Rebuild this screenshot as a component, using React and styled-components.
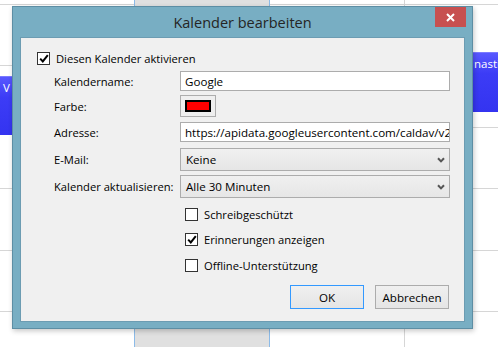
import React from "react";
import styled, { createGlobalStyle } from "styled-components";

const GlobalStyle = createGlobalStyle`
  html, body {
    margin: 0;
    padding: 0;
    background: #ffffff;
  }
  body {
    font-family: "Open Sans", "Noto Sans", sans-serif;
    color: #000000;
  }
`;

const Screen = styled.div`
  position: relative;
  width: 498px;
  height: 347px;
  overflow: hidden;
  display: flex;
  background: #ffffff;
`;

const DayColumn = styled.div`
  position: relative;
  flex: none;
  box-sizing: border-box;
  width: ${(p) => p.$w}px;
  padding-top: 4px;
  background: ${(p) => (p.$today ? "#e0e0e0" : "#ffffff")};
  border-right: ${(p) => (p.$edge ? `1px solid ${p.$edge}` : "none")};
`;

const Slot = styled.div`
  box-sizing: border-box;
  height: 61px;
  border-top: 1px solid #d6d6d6;
  &:nth-child(even) {
    height: 62px;
  }
`;

const Event = styled.div`
  position: absolute;
  left: ${(p) => p.$left}px;
  right: 0;
  top: ${(p) => p.$top}px;
  height: ${(p) => p.$h}px;
  box-sizing: border-box;
  padding: 3px 0 0 3px;
  overflow: hidden;
  white-space: nowrap;
  background: linear-gradient(#5858ff 0%, #3c3cf6 35%, #3434f0 100%);
  border-top: 1px solid #7a7aff;
  color: #ffffff;
  font-size: 11.5px;
`;

const Dialog = styled.div`
  position: absolute;
  left: 12px;
  top: 6px;
  width: 461px;
  height: 323px;
  box-sizing: border-box;
  display: flex;
  flex-direction: column;
  background: #78aec3;
  border: 1px solid #5d8ea4;
  box-shadow: 1px 2px 5px rgba(0, 0, 0, 0.22);
`;

const TitleBar = styled.div`
  position: relative;
  height: 30px;
  flex: none;
  display: flex;
  align-items: center;
  justify-content: center;
`;

const Title = styled.div`
  font-size: 14.5px;
  color: #252525;
  padding-top: 1px;
`;

const CloseButton = styled.div`
  position: absolute;
  top: 0;
  right: 6px;
  width: 31px;
  height: 20px;
  display: flex;
  align-items: center;
  justify-content: center;
  background: #c75050;
`;

const Client = styled.div`
  flex: 1;
  margin: 0 7px 6px 7px;
  box-sizing: border-box;
  background: #f0f0f0;
  border: 1px solid #6c9cb2;
  padding-top: 14px;
  font-size: 11.2px;
`;

const CheckRow = styled.label`
  display: flex;
  align-items: center;
  gap: 6px;
  height: 13px;
  margin-left: ${(p) => p.$indent}px;
  margin-top: ${(p) => p.$top || 0}px;
  color: #000000;
`;

const Box = styled.span`
  width: 13px;
  height: 13px;
  box-sizing: border-box;
  flex: none;
  display: flex;
  align-items: center;
  justify-content: center;
  background: #ffffff;
  border: 1px solid #333333;
`;

const FieldRow = styled.div`
  display: grid;
  grid-template-columns: 126px 270px;
  align-items: center;
  margin-left: 33px;
  margin-top: ${(p) => p.$top}px;
  height: ${(p) => p.$h}px;
`;

const Label = styled.span`
  color: #000000;
`;

const TextInput = styled.div`
  height: 20px;
  box-sizing: border-box;
  border: 1px solid #acacac;
  background: #ffffff;
  padding: 0 4px;
  display: flex;
  align-items: center;
  overflow: hidden;
  white-space: nowrap;
  font-size: 11.6px;
`;

const ColorButton = styled.div`
  width: 36px;
  height: 22px;
  box-sizing: border-box;
  border: 1px solid #adadad;
  background: #efefef;
  display: flex;
  align-items: center;
  justify-content: center;
`;

const Swatch = styled.span`
  width: 26px;
  height: 12px;
  box-sizing: border-box;
  background: #ff0000;
  border: 2px solid #000000;
`;

const Select = styled.div`
  height: 23px;
  box-sizing: border-box;
  border: 1px solid #acacac;
  background: linear-gradient(#f0f0f0, #e6e6e6);
  padding: 0 4px 0 5px;
  display: flex;
  align-items: center;
  justify-content: space-between;
  font-size: 11.6px;
`;

const ButtonBar = styled.div`
  display: flex;
  justify-content: flex-end;
  gap: 11px;
  margin-top: 13px;
  margin-right: 15px;
`;

const Button = styled.div`
  width: 74px;
  height: 24px;
  box-sizing: border-box;
  display: flex;
  align-items: center;
  justify-content: center;
  background: linear-gradient(#f0f0f0, #e5e5e5);
  border: 1px solid ${(p) => (p.$default ? "#3399ff" : "#acacac")};
  font-size: 11.6px;
`;

const CheckMark = () => (
  <svg width="10" height="9" viewBox="0 0 10 9">
    <path d="M1.2 4.6 L3.8 7.4 L8.8 1.2" fill="none" stroke="#000" strokeWidth="2" />
  </svg>
);

const Chevron = () => (
  <svg width="8" height="6" viewBox="0 0 8 6">
    <path d="M1 1.2 L4 4.4 L7 1.2" fill="none" stroke="#555" strokeWidth="2" />
  </svg>
);

const Check = ({ checked, children, indent, top }) => (
  <CheckRow $indent={indent} $top={top}>
    <Box>{checked && <CheckMark />}</Box>
    {children}
  </CheckRow>
);

export default function App() {
  return (
    <>
      <GlobalStyle />
      <Screen>
        <DayColumn $w={135} $edge="#8cbbe8">
          <Slot />
          <Slot />
          <Slot />
          <Slot />
          <Slot />
          <Slot />
          <Event $left={0} $top={76} $h={59}>V</Event>
        </DayColumn>
        <DayColumn $w={135} $today $edge="#8cbbe8" />
        <DayColumn $w={135} $edge="#d6d6d6">
          <Slot />
          <Slot />
          <Slot />
          <Slot />
          <Slot />
          <Slot />
        </DayColumn>
        <DayColumn $w={93}>
          <Slot />
          <Slot />
          <Slot />
          <Slot />
          <Slot />
          <Slot />
          <Event $left={66} $top={52} $h={60}>nastik</Event>
        </DayColumn>

        <Dialog>
          <TitleBar>
            <Title>Kalender bearbeiten</Title>
            <CloseButton>
              <svg width="9" height="9" viewBox="0 0 9 9">
                <path d="M1 1 L8 8 M8 1 L1 8" stroke="#fff" strokeWidth="2" />
              </svg>
            </CloseButton>
          </TitleBar>
          <Client>
            <Check checked indent={16}>Diesen Kalender aktivieren</Check>

            <FieldRow $top={6} $h={20}>
              <Label>Kalendername:</Label>
              <TextInput>Google</TextInput>
            </FieldRow>
            <FieldRow $top={4} $h={22}>
              <Label>Farbe:</Label>
              <ColorButton>
                <Swatch />
              </ColorButton>
            </FieldRow>
            <FieldRow $top={5} $h={20}>
              <Label>Adresse:</Label>
              <TextInput>https://apidata.googleusercontent.com/caldav/v2/</TextInput>
            </FieldRow>
            <FieldRow $top={6} $h={23}>
              <Label>E-Mail:</Label>
              <Select>
                <span>Keine</span>
                <Chevron />
              </Select>
            </FieldRow>
            <FieldRow $top={4} $h={23}>
              <Label>Kalender aktualisieren:</Label>
              <Select>
                <span>Alle 30 Minuten</span>
                <Chevron />
              </Select>
            </FieldRow>

            <Check indent={164} top={10}>Schreibgeschützt</Check>
            <Check checked indent={164} top={12}>Erinnerungen anzeigen</Check>
            <Check indent={164} top={13}>Offline-Unterstützung</Check>

            <ButtonBar>
              <Button $default>OK</Button>
              <Button>Abbrechen</Button>
            </ButtonBar>
          </Client>
        </Dialog>
      </Screen>
    </>
  );
}
